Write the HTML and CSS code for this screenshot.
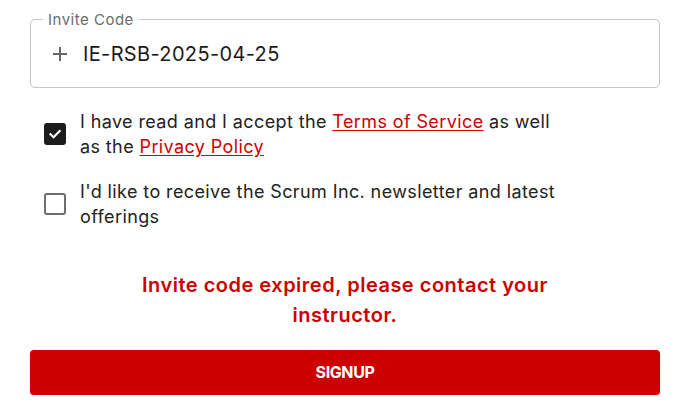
FILE: index.html
```html
<!DOCTYPE html>
<html lang="en">
<head>
<meta charset="utf-8">
<title>Signup</title>
<link rel="stylesheet" href="styles.css">
</head>
<body>
<div class="page">
  <div class="field">
    <span class="field-label">Invite Code</span>
    <svg class="plus" width="16" height="16" viewBox="0 0 16 16" aria-hidden="true">
      <path d="M8 1v14M1 8h14" stroke="#666" stroke-width="2" fill="none"/>
    </svg>
    <span class="field-value">IE-RSB-2025-04-25</span>
  </div>

  <label class="check-row first">
    <span class="box checked">
      <svg width="20" height="20" viewBox="0 0 20 20" aria-hidden="true">
        <path d="M5 10.2l3.4 3.4 6.8-7" stroke="#fff" stroke-width="2.4" fill="none" stroke-linecap="square"/>
      </svg>
    </span>
    <span class="check-text">I have read and I accept the <a href="#">Terms of Service</a> as well as the <a href="#">Privacy Policy</a></span>
  </label>

  <label class="check-row">
    <span class="box"></span>
    <span class="check-text">I'd like to receive the Scrum Inc. newsletter and latest offerings</span>
  </label>

  <p class="error">Invite code expired, please contact your instructor.</p>

  <button class="signup" type="button">SIGNUP</button>
</div>
</body>
</html>
```

FILE: styles.css
```css
html, body {
  margin: 0;
  padding: 0;
  background: #fff;
}
body {
  font-family: "Inter", "Open Sans", sans-serif;
  color: #1f1f1f;
}
.page {
  padding: 19px 29px 0 30px;
}
.field {
  position: relative;
  height: 69px;
  box-sizing: border-box;
  border: 1px solid #c4c4c4;
  border-radius: 5px;
  display: flex;
  align-items: center;
  padding-left: 21px;
}
.field-label {
  position: absolute;
  top: -9px;
  left: 12px;
  padding: 0 5px;
  background: #fff;
  font-size: 15px;
  line-height: 18px;
  letter-spacing: 0.5px;
  color: #6b6b6b;
}
.plus {
  flex: none;
}
.field-value {
  margin-left: 15px;
  font-size: 20px;
  color: #1a1a1a;
  letter-spacing: 0.35px;
}
.check-row {
  display: flex;
  align-items: center;
  margin-top: 20px;
  padding-left: 14px;
  padding-right: 100px;
}
.check-row.first {
  margin-top: 21px;
}
.box {
  flex: none;
  width: 22px;
  height: 22px;
  box-sizing: border-box;
  border: 2px solid #6e6e6e;
  border-radius: 3px;
  display: flex;
  align-items: center;
  justify-content: center;
}
.box.checked {
  background: #1c1c1c;
  border-color: #1c1c1c;
}
.check-text {
  margin-left: 14px;
  font-size: 18px;
  line-height: 25px;
  letter-spacing: 0.39px;
  color: #222;
}
.check-text a {
  color: #cc0000;
  text-decoration: underline;
  text-underline-offset: 2px;
}
.error {
  margin: 40.5px auto 0;
  max-width: 440px;
  text-align: center;
  font-size: 20px;
  line-height: 30px;
  letter-spacing: 0.5px;
  font-weight: 600;
  color: #cc0000;
}
.signup {
  display: block;
  width: 100%;
  height: 45px;
  margin-top: 20px;
  border: none;
  border-radius: 4px;
  background: #cc0000;
  color: #fff;
  font-family: "Inter", sans-serif;
  font-size: 16px;
  font-weight: 700;
  letter-spacing: -0.4px;
  box-shadow: 0 2px 3px rgba(0, 0, 0, 0.15);
}
```
